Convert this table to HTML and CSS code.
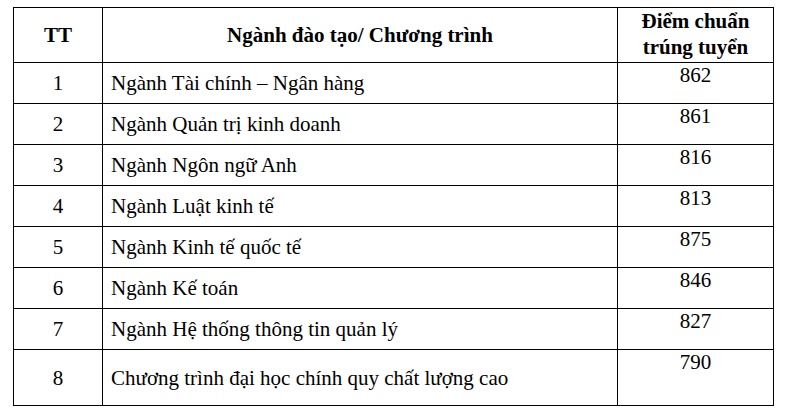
FILE: index.html
```html
<!DOCTYPE html>
<html lang="vi">
<head>
<meta charset="utf-8">
<link rel="stylesheet" href="styles.css">
</head>
<body>
<div class="page">
<table class="score-table">
  <colgroup>
    <col class="c-tt">
    <col class="c-name">
    <col class="c-score">
  </colgroup>
  <thead>
    <tr class="head-row">
      <th class="tt">TT</th>
      <th class="name-head">Ngành đào tạo/ Chương trình</th>
      <th class="score-head">Điểm chuẩn<br>trúng tuyển</th>
    </tr>
  </thead>
  <tbody>
    <tr><td class="tt">1</td><td class="name">Ngành Tài chính – Ngân hàng</td><td class="score">862</td></tr>
    <tr><td class="tt">2</td><td class="name">Ngành Quản trị kinh doanh</td><td class="score">861</td></tr>
    <tr><td class="tt">3</td><td class="name">Ngành Ngôn ngữ Anh</td><td class="score">816</td></tr>
    <tr><td class="tt">4</td><td class="name">Ngành Luật kinh tế</td><td class="score">813</td></tr>
    <tr><td class="tt">5</td><td class="name">Ngành Kinh tế quốc tế</td><td class="score">875</td></tr>
    <tr><td class="tt">6</td><td class="name">Ngành Kế toán</td><td class="score">846</td></tr>
    <tr><td class="tt">7</td><td class="name">Ngành Hệ thống thông tin quản lý</td><td class="score">827</td></tr>
    <tr class="last-row"><td class="tt">8</td><td class="name">Chương trình đại học chính quy chất lượng cao</td><td class="score">790</td></tr>
  </tbody>
</table>
</div>
</body>
</html>
```
FILE: styles.css
```css
html, body {
  margin: 0;
  padding: 0;
  background: #ffffff;
}
.page {
  padding: 7px 0 0 13px;
}
.score-table {
  border-collapse: collapse;
  table-layout: fixed;
  width: 760px;
  font-family: "Liberation Serif", "Times New Roman", serif;
  font-size: 21px;
  line-height: 24px;
  color: #000000;
}
.c-tt { width: 89px; }
.c-name { width: 515px; }
.c-score { width: 156px; }
.score-table th,
.score-table td {
  border: 1px solid #000000;
  padding: 0;
}
.head-row { height: 55px; }
.score-table tbody tr { height: 41px; }
.score-table tbody tr.last-row { height: 56px; }
.score-table th {
  font-weight: bold;
  text-align: center;
  vertical-align: middle;
}
.score-table .score-head {
  vertical-align: top;
  line-height: 26px;
}
.score-table td.tt {
  text-align: center;
  vertical-align: middle;
}
.score-table td.name {
  text-align: left;
  vertical-align: middle;
  padding-left: 8px;
}
.score-table td.score {
  text-align: center;
  vertical-align: top;
}
```
